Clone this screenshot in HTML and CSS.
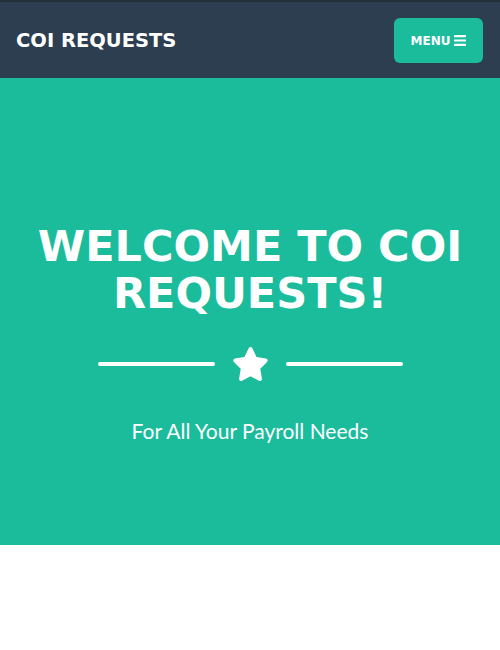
FILE: index.html
```html
<!DOCTYPE html>
<html lang="en">
<head>
<meta charset="utf-8">
<title>COI Requests</title>
<link rel="stylesheet" href="styles.css">
</head>
<body>
<nav class="navbar">
  <a class="brand" href="#">COI REQUESTS</a>
  <button class="menu-btn" type="button">MENU <svg class="bars" viewBox="0 0 12 11" width="12" height="11"><rect x="0" y="0" width="12" height="2.2" rx="0.5"/><rect x="0" y="4.4" width="12" height="2.2" rx="0.5"/><rect x="0" y="8.8" width="12" height="2.2" rx="0.5"/></svg></button>
</nav>
<header class="masthead">
  <h1 class="heading">WELCOME TO COI REQUESTS!</h1>
  <div class="divider">
    <span class="line"></span>
    <svg class="star" viewBox="0 0 576 512" width="37" height="34" preserveAspectRatio="none"><path d="M259.3 17.8L194 150.2 47.9 171.5c-26.2 3.8-36.7 36.1-17.7 54.6l105.7 103-25 145.5c-4.5 26.3 23.2 46 46.4 33.7L288 439.6l130.7 68.7c23.2 12.2 50.9-7.4 46.4-33.7l-25-145.5 105.7-103c19-18.5 8.5-50.8-17.7-54.6L382 150.2 316.7 17.8c-11.7-23.6-45.6-23.9-57.4 0z"/></svg>
    <span class="line"></span>
  </div>
  <p class="subheading">For All Your Payroll Needs</p>
</header>
</body>
</html>
```

FILE: styles.css
```css
html, body {
  margin: 0;
  padding: 0;
  background: #ffffff;
}

.navbar {
  height: 78px;
  box-sizing: border-box;
  background: #2c3e50;
  border-top: 2px solid #252f3a;
  display: flex;
  align-items: center;
  justify-content: space-between;
  padding: 0 17px 0 16px;
}

.brand {
  font-family: "DejaVu Sans", sans-serif;
  font-weight: bold;
  font-size: 19.5px;
  color: #ffffff;
  text-decoration: none;
}

.menu-btn {
  width: 89px;
  height: 45px;
  background: #1abc9c;
  border: none;
  border-radius: 6px;
  color: #ffffff;
  font-family: "DejaVu Sans", sans-serif;
  font-weight: bold;
  font-size: 12px;
  display: flex;
  align-items: center;
  justify-content: center;
  gap: 4px;
  padding: 0;
  margin-top: 1px;
}

.bars {
  fill: #ffffff;
}

.masthead {
  background: #1abc9c;
  height: 467px;
  display: flex;
  flex-direction: column;
  align-items: center;
  color: #ffffff;
  padding: 145px 20px 0;
  box-sizing: border-box;
}

.heading {
  margin: 0;
  font-family: "DejaVu Sans", sans-serif;
  font-weight: bold;
  font-size: 43px;
  line-height: 47px;
  text-align: center;
}

.divider {
  display: flex;
  align-items: center;
  gap: 17px;
  margin-top: 30px;
}

.line {
  width: 117px;
  height: 4px;
  border-radius: 2px;
  background: #ffffff;
}

.star {
  fill: #ffffff;
  display: block;
}

.subheading {
  margin: 38px 0 0;
  font-family: Lato, sans-serif;
  font-size: 21px;
  line-height: 24px;
}
```
